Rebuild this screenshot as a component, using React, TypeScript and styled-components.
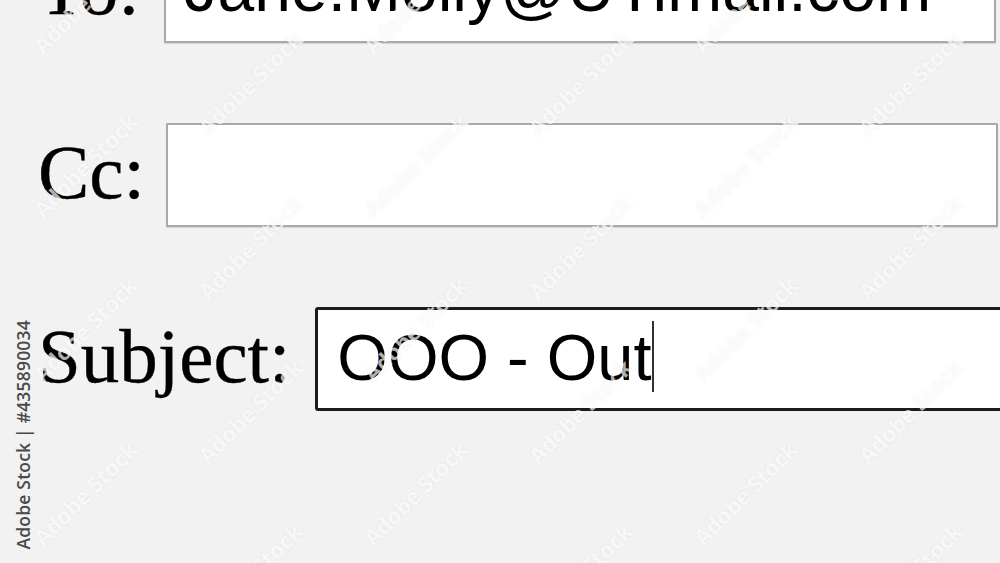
import React from "react";
import styled, { createGlobalStyle } from "styled-components";

const Global = createGlobalStyle`
  html, body { margin: 0; padding: 0; background: #f2f2f2; }
  body { width: 1000px; height: 563px; overflow: hidden; }
  #root { width: 1000px; height: 563px; }
`;

const Page = styled.div`
  position: relative;
  width: 1000px;
  height: 563px;
  overflow: hidden;
  background: #f2f2f2;
`;

const Form = styled.div`
  display: flex;
  flex-direction: column;
  gap: 80px;
  margin-top: -61px;
  padding-left: 38px;
`;

const Row = styled.div<{ $gap: number }>`
  display: flex;
  align-items: flex-start;
  gap: ${(p) => p.$gap}px;
  white-space: nowrap;
`;

const Label = styled.span`
  font-family: "Liberation Serif", "Times New Roman", serif;
  font-size: 77px;
  color: #000;
  line-height: 98px;
  -webkit-text-stroke: 0.4px #000;
`;

const Field = styled.div<{ $focused?: boolean }>`
  box-sizing: border-box;
  flex: none;
  width: 832px;
  height: 104px;
  display: flex;
  align-items: center;
  padding: 0 18px 6px 19px;
  background: #fff;
  border: ${(p) => (p.$focused ? "3px solid #1c1c1c" : "2px solid #a9a9a9")};
  border-radius: ${(p) => (p.$focused ? "3px" : "1px")};
  box-shadow: ${(p) => (p.$focused ? "none" : "0 1px 1px rgba(0,0,0,0.12)")};
  font-family: "Liberation Sans", Arial, sans-serif;
  font-size: ${(p) => (p.$focused ? 65 : 66)}px;
  color: #000;
  line-height: 1;
`;

const Caret = styled.span`
  display: inline-block;
  width: 2px;
  height: 71px;
  margin-left: 0;
  background: #333;
  vertical-align: -12px;
`;

const Watermarks = styled.div`
  position: absolute;
  inset: -40px -80px -40px -80px;
  display: grid;
  grid-template-columns: repeat(6, 330px);
  grid-auto-rows: 82px;
  pointer-events: none;
`;

const Mark = styled.span<{ $shift: boolean }>`
  display: block;
  transform: translateX(${(p) => (p.$shift ? 165 : 0)}px) rotate(-45deg);
  transform-origin: center;
  font-family: "Open Sans", "DejaVu Sans", sans-serif;
  font-weight: 700;
  font-size: 22px;
  color: rgba(255, 255, 255, 0.7);
  text-shadow: 0 0 3px rgba(0, 0, 0, 0.06);
  white-space: nowrap;
  align-self: center;
  justify-self: center;
`;

const SideCredit = styled.div`
  position: absolute;
  left: 11px;
  bottom: 14px;
  writing-mode: vertical-rl;
  transform: rotate(180deg);
  font-family: "Open Sans", "DejaVu Sans", sans-serif;
  font-size: 17.5px;
  font-weight: 600;
  color: #4a4a4a;
  letter-spacing: 0.2px;
  white-space: nowrap;
`;

export default function App() {
  const marks = Array.from({ length: 48 }, (_, i) => i);
  return (
    <Page>
      <Global />
      <Form>
        <Row $gap={24}>
          <Label>To:</Label>
          <Field>Jane.Molly@UTimail.com</Field>
        </Row>
        <Row $gap={21}>
          <Label>Cc:</Label>
          <Field />
        </Row>
        <Row $gap={25}>
          <Label>Subject:</Label>
          <Field $focused>
            <span>
              OOO - Out
              <Caret />
            </span>
          </Field>
        </Row>
      </Form>
      <Watermarks>
        {marks.map((i) => (
          <Mark key={i} $shift={Math.floor(i / 6) % 2 === 1}>
            Adobe Stock
          </Mark>
        ))}
      </Watermarks>
      <SideCredit>Adobe Stock | #435890034</SideCredit>
    </Page>
  );
}
